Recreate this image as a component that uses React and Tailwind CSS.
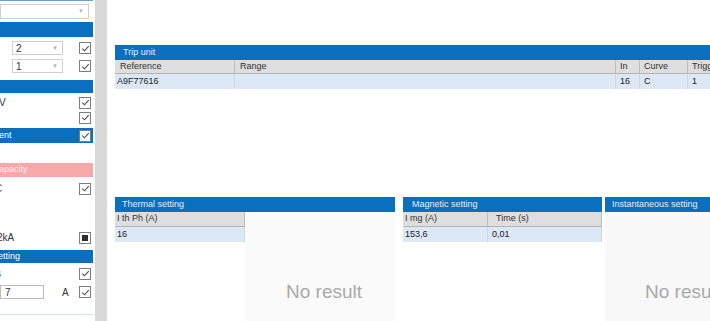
import React from "react";

const Check = ({ filled }) => (
  <span className="w-[12px] h-[12px] shrink-0 border border-[#7d7d7d] bg-white flex items-center justify-center">
    {filled ? (
      <span className="w-[6px] h-[6px] bg-[#2e2e2e]" />
    ) : (
      <svg viewBox="0 0 10 10" className="w-[9px] h-[9px]">
        <path d="M1.4 5.2 L3.9 7.6 L8.6 2.3" stroke="#4a4a4a" strokeWidth="1.2" fill="none" />
      </svg>
    )}
  </span>
);

const Combo = ({ value, className }) => (
  <div className={"h-full border border-[#cfcfcf] bg-white flex items-center justify-between pl-[3px] pr-[4px] " + className}>
    <span className="text-[10px] text-[#333]">{value}</span>
    <span className="text-[6px] text-[#b0b0b0]">▼</span>
  </div>
);

const Band = ({ children, className = "" }) => (
  <div className={"w-[93px] bg-[#0b6fc0] text-white text-[9px] flex items-center justify-between pr-[2px] overflow-hidden " + className}>
    {children}
  </div>
);

const LeftPanel = () => (
  <aside className="w-[95px] shrink-0 flex flex-col overflow-hidden">
    <div className="h-[1px] w-[93px] bg-[#6aa3d6]" />
    <div className="mt-[3px] h-[15px] w-[89px]">
      <Combo value="" className="w-full" />
    </div>
    <Band className="mt-[3px] h-[15px]" />
    <div className="mt-[4px] h-[14px] w-[93px] flex items-center justify-between pr-[2px]">
      <div className="ml-[12px] h-full w-[51px]">
        <Combo value="2" className="w-full" />
      </div>
      <Check />
    </div>
    <div className="mt-[4px] h-[14px] w-[93px] flex items-center justify-between pr-[2px]">
      <div className="ml-[12px] h-full w-[51px]">
        <Combo value="1" className="w-full" />
      </div>
      <Check />
    </div>
    <Band className="mt-[7px] h-[13px]" />
    <div className="mt-[3px] h-[13px] w-[93px] flex items-center justify-between pr-[2px] text-[10px] text-[#333]">
      <span className="-ml-[1px]">V</span>
      <Check />
    </div>
    <div className="mt-[2px] h-[13px] w-[93px] flex items-center justify-end pr-[2px]">
      <Check />
    </div>
    <Band className="mt-[4px] h-[15px]">
      <span className="-ml-[1px]">ent</span>
      <Check />
    </Band>
    <div className="h-[20px] w-[93px]" />
    <div className="h-[14px] w-[93px] bg-[#f7a8a8] text-[9px] text-[#fff0f0] flex items-center">
      <span className="-ml-[1px]">apacity</span>
    </div>
    <div className="mt-[5px] h-[13px] w-[93px] flex items-center justify-between pr-[2px] text-[10px] text-[#666]">
      <span className="-ml-[5px]">C</span>
      <Check />
    </div>
    <div className="mt-[36px] h-[13px] w-[93px] flex items-center justify-between pr-[2px] text-[10px] text-[#333]">
      <span className="-ml-[3px]">2kA</span>
      <Check filled />
    </div>
    <Band className="mt-[6px] h-[13px]">
      <span className="-ml-[2px]">etting</span>
    </Band>
    <div className="mt-[4px] h-[13px] w-[93px] flex items-center justify-between pr-[2px] text-[10px] text-[#333]">
      <span className="-ml-[4px]">s</span>
      <Check />
    </div>
    <div className="mt-[5px] h-[14px] w-[93px] flex items-center pr-[2px] text-[10px] text-[#333]">
      <div className="h-full w-[44px] border border-[#bdbdbd] bg-white flex items-center pl-[4px]">7</div>
      <span className="ml-[18px]">A</span>
      <span className="ml-auto">
        <Check />
      </span>
    </div>
    <div className="mt-[15px] h-[1px] w-[93px] bg-[#cde6e0]" />
  </aside>
);

const PanelHeader = ({ title, pl = "pl-[8px]" }) => (
  <div className={"h-[15px] bg-[#0b6fc0] text-[9px] text-[#e6f0fb] flex items-center whitespace-nowrap " + pl}>
    {title}
  </div>
);

const HeadCell = ({ children, className = "" }) => (
  <div className={"h-full shrink-0 flex items-center border-r border-[#bcbcbc] text-[9px] text-[#333] whitespace-nowrap " + className}>
    {children}
  </div>
);

const DataCell = ({ children, className = "" }) => (
  <div className={"h-full shrink-0 flex items-center border-r border-[#cbd7e8] text-[9px] text-[#222] whitespace-nowrap " + className}>
    {children}
  </div>
);

const NoResult = ({ className = "" }) => (
  <div className={"flex items-center justify-center text-[19px] text-[#a9a9a9] whitespace-nowrap " + className}>
    No result
  </div>
);

export default function App() {
  return (
    <div className="flex w-[710px] h-[321px] overflow-hidden bg-white font-['Liberation_Sans',Arial,sans-serif]">
      <LeftPanel />
      <div className="w-[12px] shrink-0 bg-[#d8d8d8]" />
      <main className="flex-1 min-w-0 pl-[8px] pt-[45px] flex flex-col">
        <section className="h-[152px] w-[640px] shrink-0">
          <PanelHeader title="Trip unit" />
          <div className="h-[14px] bg-[#dedede] border-b border-[#b5b5b5] flex">
            <HeadCell className="w-[120px] pl-[5px]">Reference</HeadCell>
            <HeadCell className="w-[381px] pl-[5px]">Range</HeadCell>
            <HeadCell className="w-[24px] pl-[4px]">In</HeadCell>
            <HeadCell className="w-[48px] pl-[4px]">Curve</HeadCell>
            <HeadCell className="w-[60px] pl-[4px]">Trigg</HeadCell>
          </div>
          <div className="h-[15px] bg-[#dde8f7] flex">
            <DataCell className="w-[120px] pl-[2px]">A9F77616</DataCell>
            <DataCell className="w-[381px]" />
            <DataCell className="w-[24px] pl-[4px]">16</DataCell>
            <DataCell className="w-[48px] pl-[4px]">C</DataCell>
            <DataCell className="w-[60px] pl-[4px]">1</DataCell>
          </div>
        </section>

        <section className="flex h-[175px] shrink-0">
          <div className="w-[280px] shrink-0 flex flex-col">
            <PanelHeader title="Thermal setting" pl="pl-[7px]" />
            <div className="flex flex-1">
              <div className="w-[130px] shrink-0 bg-white">
                <div className="h-[15px] bg-[#dedede] border-b border-[#b5b5b5] flex">
                  <HeadCell className="w-[130px] pl-[2px]">I th Ph (A)</HeadCell>
                </div>
                <div className="h-[15px] bg-[#dde8f7] flex">
                  <DataCell className="w-[130px] pl-[2px]">16</DataCell>
                </div>
              </div>
              <NoResult className="flex-1 bg-[#fafafa] pl-[8px]" />
            </div>
          </div>

          <div className="ml-[8px] w-[199px] shrink-0 flex flex-col">
            <PanelHeader title="Magnetic setting" pl="pl-[9px]" />
            <div className="h-[15px] bg-[#dedede] border-b border-[#b5b5b5] flex">
              <HeadCell className="w-[85px] pl-[2px]">I mg (A)</HeadCell>
              <HeadCell className="w-[114px] pl-[8px]">Time (s)</HeadCell>
            </div>
            <div className="h-[15px] bg-[#dde8f7] flex">
              <DataCell className="w-[85px] pl-[2px]">153,6</DataCell>
              <DataCell className="w-[114px] pl-[4px]">0,01</DataCell>
            </div>
            <div className="flex-1 bg-white" />
          </div>

          <div className="ml-[3px] w-[160px] shrink-0 flex flex-col">
            <PanelHeader title="Instantaneous setting" pl="pl-[7px]" />
            <NoResult className="flex-1 bg-[#f8f8f8] justify-start pl-[40px]" />
          </div>
        </section>
      </main>
    </div>
  );
}
